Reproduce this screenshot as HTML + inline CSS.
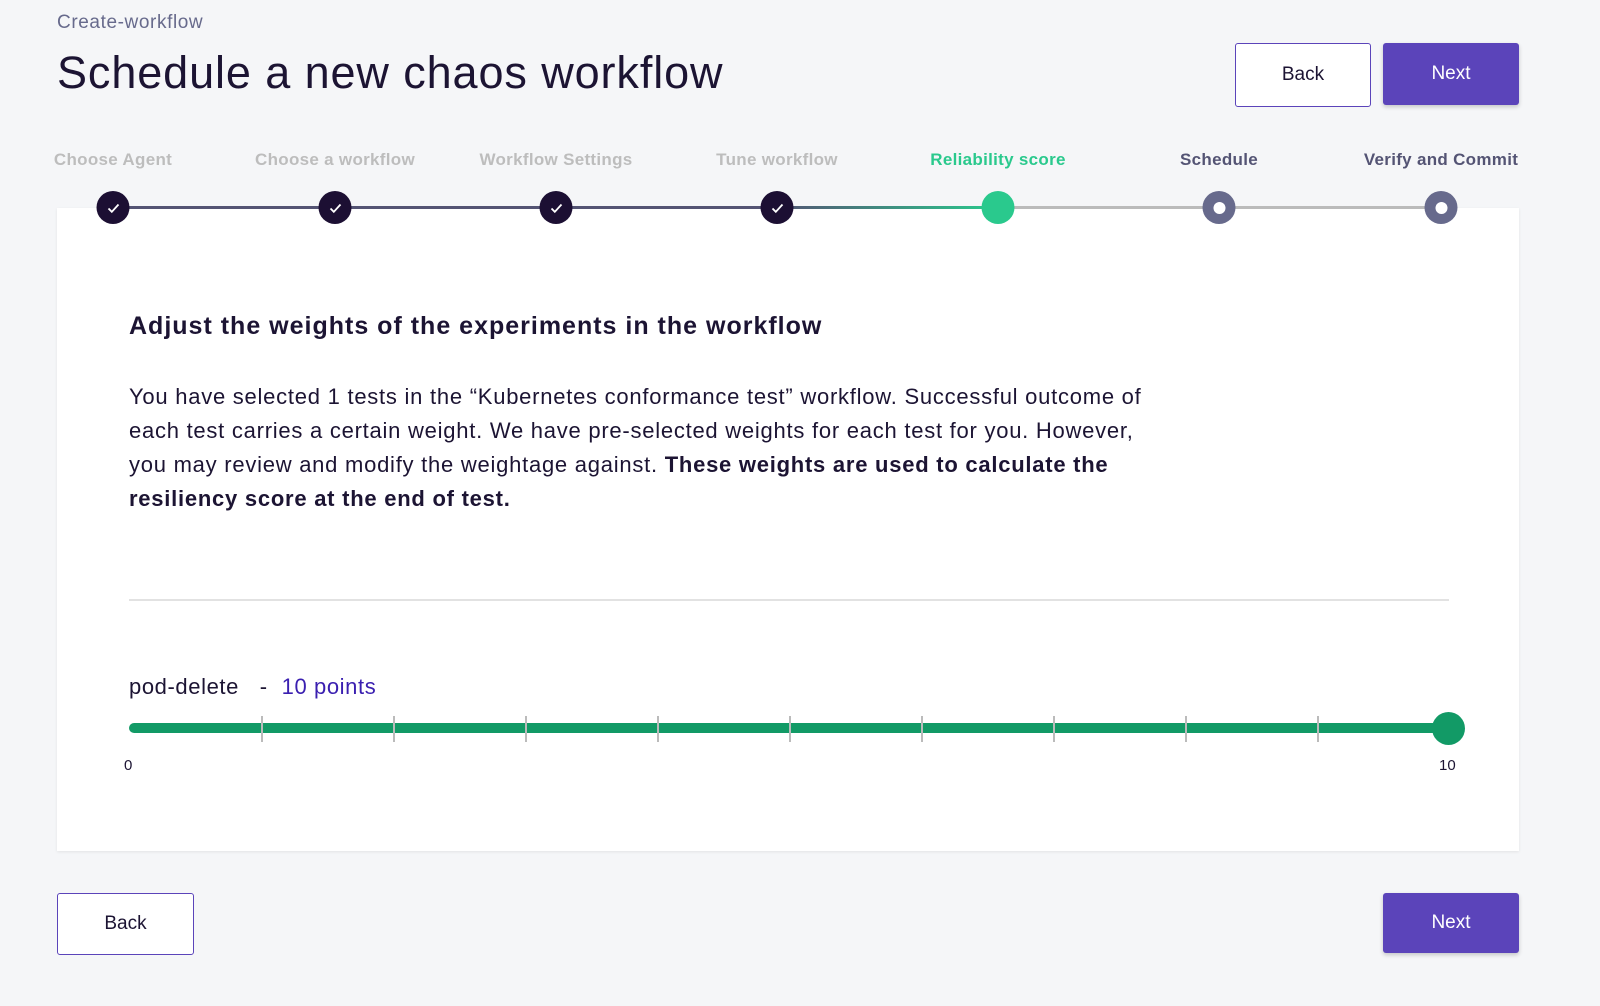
<!DOCTYPE html>
<html><head><style>
*{margin:0;padding:0;box-sizing:border-box}
body{width:1600px;height:1006px;background:#f5f6f8;font-family:"Liberation Sans",sans-serif;position:relative;overflow:hidden;color:#1c1433}
.a{position:absolute}
.btn{position:absolute;border-radius:3px;font-size:19px;display:flex;align-items:center;justify-content:center}
.back{border:1px solid #5b44ba;background:#fff;color:#1c1433}
.next{background:#5b44ba;color:#fff;box-shadow:0 2px 4px rgba(0,0,0,.2)}
.lab{position:absolute;top:150px;font-size:17px;font-weight:bold;color:#bdbdbd;transform:translateX(-50%);white-space:nowrap;letter-spacing:0.3px}
.c{position:absolute;top:191px;width:33px;height:33px;border-radius:50%;transform:translateX(-50%);display:flex;align-items:center;justify-content:center}
.done{background:#1c0f33}
.todo{background:#676a8c}
.todo::after{content:"";width:12px;height:12px;background:#fff;border-radius:50%}
.tick{position:absolute;top:716px;width:2px;height:26px;background:#bbb}
</style></head><body>
<div class="a" style="left:57px;top:12px;font-size:19px;color:#676a8c;letter-spacing:0.6px">Create-workflow</div>
<div class="a" style="left:57px;top:47px;font-size:45px;color:#1c1433;letter-spacing:0.9px">Schedule a new chaos workflow</div>
<div class="btn back" style="left:1235px;top:43px;width:136px;height:64px">Back</div>
<div class="btn next" style="left:1383px;top:43px;width:136px;height:62px">Next</div>

<div class="a" style="left:57px;top:208px;width:1462px;height:643px;background:#fff;box-shadow:0 1px 3px rgba(0,0,0,.08)"></div>

<div class="a" style="left:113px;top:206px;width:664px;height:3px;background:#545474"></div>
<div class="a" style="left:777px;top:206px;width:221px;height:3px;background:linear-gradient(90deg,#545474,#2ac98d)"></div>
<div class="a" style="left:998px;top:206px;width:442px;height:3px;background:#bbb"></div>

<div class="lab" style="left:113px">Choose Agent</div>
<div class="lab" style="left:335px">Choose a workflow</div>
<div class="lab" style="left:556px">Workflow Settings</div>
<div class="lab" style="left:777px">Tune workflow</div>
<div class="lab" style="left:998px;color:#2ac98d">Reliability score</div>
<div class="lab" style="left:1219px;color:#545474">Schedule</div>
<div class="lab" style="left:1441px;color:#545474">Verify and Commit</div>

<div class="c done" style="left:113px"><svg width="16" height="16" viewBox="0 0 16 16"><path d="M3 8.5l3.3 3.3L13 4.5" stroke="#fff" stroke-width="1.8" fill="none"/></svg></div>
<div class="c done" style="left:335px"><svg width="16" height="16" viewBox="0 0 16 16"><path d="M3 8.5l3.3 3.3L13 4.5" stroke="#fff" stroke-width="1.8" fill="none"/></svg></div>
<div class="c done" style="left:556px"><svg width="16" height="16" viewBox="0 0 16 16"><path d="M3 8.5l3.3 3.3L13 4.5" stroke="#fff" stroke-width="1.8" fill="none"/></svg></div>
<div class="c done" style="left:777px"><svg width="16" height="16" viewBox="0 0 16 16"><path d="M3 8.5l3.3 3.3L13 4.5" stroke="#fff" stroke-width="1.8" fill="none"/></svg></div>
<div class="c" style="left:998px;background:#2ac98d"></div>
<div class="c todo" style="left:1219px"></div>
<div class="c todo" style="left:1441px"></div>

<div class="a" style="left:129px;top:312px;font-size:25px;font-weight:bold;letter-spacing:1px">Adjust the weights of the experiments in the workflow</div>
<div class="a" style="left:129px;top:380px;width:1035px;font-size:22px;line-height:34px;letter-spacing:0.75px">You have selected 1 tests in the “Kubernetes conformance test” workflow. Successful outcome of each test carries a certain weight. We have pre-selected weights for each test for you. However, you may review and modify the weightage against. <b>These weights are used to calculate the resiliency score at the end of test.</b></div>
<div class="a" style="left:129px;top:599px;width:1320px;height:2px;background:#e2e2e2"></div>

<div class="a" style="left:129px;top:674px;font-size:22px;letter-spacing:0.6px">pod-delete <span style="margin:0 14px">-</span><span style="color:#3a1fb0">10 points</span></div>
<div class="a" style="left:129px;top:723px;width:1320px;height:10px;border-radius:5px;background:#129a66"></div>
<div class="tick" style="left:261px"></div><div class="tick" style="left:393px"></div><div class="tick" style="left:525px"></div><div class="tick" style="left:657px"></div><div class="tick" style="left:789px"></div><div class="tick" style="left:921px"></div><div class="tick" style="left:1053px"></div><div class="tick" style="left:1185px"></div><div class="tick" style="left:1317px"></div>
<div class="a" style="left:1432px;top:712px;width:33px;height:33px;border-radius:50%;background:#129a66"></div>
<div class="a" style="left:124px;top:757px;font-size:15px">0</div>
<div class="a" style="left:1439px;top:757px;font-size:15px">10</div>

<div class="btn back" style="left:57px;top:893px;width:137px;height:62px">Back</div>
<div class="btn next" style="left:1383px;top:893px;width:136px;height:60px">Next</div>
</body></html>
